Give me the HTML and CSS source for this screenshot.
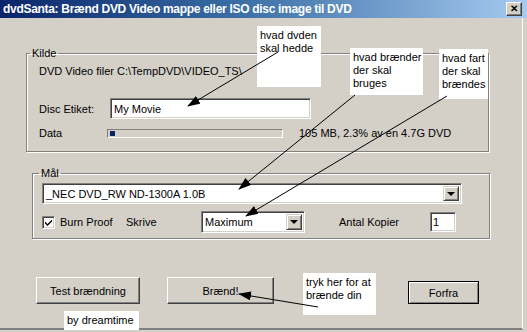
FILE: index.html
```html
<!DOCTYPE html>
<html lang="da">
<head>
    <meta charset="UTF-8">
    <title>dvdSanta</title>
    <link rel="stylesheet" href="styles.css">
</head>
<body>
    <div class="window">
        <div class="titlebar">
            <span class="title">dvdSanta: Brænd DVD Video mappe eller ISO disc image til DVD</span>
            <span class="close">✕</span>
        </div>

        <div class="client">
            <fieldset class="group kilde">
                <legend>Kilde</legend>
                <div class="group-body">
                    <div class="row src">DVD Video filer C:\TempDVD\VIDEO_TS\</div>
                    <div class="row label-row">
                        <span class="lbl lbl-disc">Disc Etiket:</span>
                        <span class="edit edit-disc">My Movie</span>
                    </div>
                    <div class="row data-row">
                        <span class="lbl lbl-data">Data</span>
                        <span class="progress"><span class="progress-fill"></span></span>
                        <span class="size">105 MB, 2.3% av en 4.7G DVD</span>
                    </div>
                </div>
            </fieldset>

            <fieldset class="group maal">
                <legend>Mål</legend>
                <div class="group-body">
                    <div class="combo combo-drive">
                        <span class="combo-text">_NEC DVD_RW ND-1300A 1.0B</span>
                        <span class="drop"><span class="tri"></span></span>
                    </div>
                    <div class="row opts">
                        <span class="check">
                            <svg width="9" height="9" viewBox="0 0 9 9"><path d="M1 3.5 L3.5 6 L8 1.5 L8 3.5 L3.5 8 L1 5.5 Z" fill="#000"/></svg>
                        </span>
                        <span class="burn">Burn Proof</span>
                        <span class="speed-lbl">Skrive<br>Hastighed</span>
                        <div class="combo combo-speed">
                            <span class="combo-text">Maximum</span>
                            <span class="drop"><span class="tri"></span></span>
                        </div>
                        <span class="copies-lbl">Antal Kopier</span>
                        <span class="edit edit-copies">1</span>
                    </div>
                </div>
            </fieldset>

            <div class="buttons">
                <span class="btn btn-test">Test brændning</span>
                <span class="btn btn-burn">Brænd!</span>
                <span class="btn btn-reset">Forfra</span>
            </div>
        </div>

        <div class="note note-name">hvad dvden<br>skal hedde</div>
        <div class="note note-burner">hvad brænder<br>der skal<br>bruges</div>
        <div class="note note-speed">hvad fart<br>der skal<br>brændes</div>
        <div class="note note-press">tryk her for at<br>brænde din</div>
        <div class="note note-by">by dreamtime</div>

        <svg class="arrows" width="527" height="332" viewBox="0 0 527 332">
            <defs>
                <marker id="head" markerUnits="userSpaceOnUse" markerWidth="13" markerHeight="9" refX="12" refY="4.5" orient="auto">
                    <path d="M0 0 L13 4.5 L0 9 Z" fill="#000"/>
                </marker>
            </defs>
            <line x1="278" y1="52" x2="188" y2="106" stroke="#000" marker-end="url(#head)"/>
            <line x1="355" y1="95" x2="239" y2="189" stroke="#000" marker-end="url(#head)"/>
            <line x1="447" y1="96" x2="246" y2="216" stroke="#000" marker-end="url(#head)"/>
            <line x1="318" y1="307" x2="239" y2="294" stroke="#000" marker-end="url(#head)"/>
        </svg>
    </div>
</body>
</html>
```

FILE: styles.css
```css
body {
    margin: 0;
    font-family: "Liberation Sans", Arial, sans-serif;
    font-size: 11px;
    color: #000;
}

.window {
    position: relative;
    width: 527px;
    height: 332px;
    background-color: #d4d0c8;
    overflow: hidden;
}

.titlebar {
    height: 18px;
    display: flex;
    align-items: center;
    justify-content: space-between;
    padding: 0 5px 0 3px;
    background: linear-gradient(to right, #0a246a, #3a6ea5 45%, #a6caf0);
}

.title {
    color: #fff;
    font-weight: bold;
    font-size: 12px;
    letter-spacing: -0.3px;
    white-space: nowrap;
}

.close {
    width: 14px;
    height: 12px;
    line-height: 12px;
    text-align: center;
    font-size: 10px;
    font-weight: bold;
    background-color: #d4d0c8;
    border-top: 1px solid #fff;
    border-left: 1px solid #fff;
    border-right: 1px solid #404040;
    border-bottom: 1px solid #404040;
    box-shadow: inset -1px -1px 0 #808080;
}

.client {
    height: 312px;
    box-sizing: border-box;
    padding-top: 28px;
    border-bottom: 2px solid #808080;
    border-right: 1px solid #fff;
    margin-right: 4px;
}

/* group boxes */
.group {
    margin: 0;
    padding: 0;
    box-sizing: border-box;
    border: 1px solid #808080;
    box-shadow: 1px 1px 0 #fff, inset 1px 1px 0 #fff;
    min-width: 0;
}

.group legend {
    padding: 0 2px;
    line-height: 14px;
}

.kilde {
    margin-left: 26px;
    width: 463px;
    height: 106px;
}

.kilde legend {
    margin-left: 3px;
}

.kilde .group-body {
    padding: 4px 0 0 12px;
}

.maal {
    margin: 14px 0 0 32px;
    width: 458px;
    height: 73px;
}

.maal legend {
    margin-left: 6px;
}

.maal .group-body {
    padding: 3px 0 0 9px;
}

.row {
    display: flex;
    align-items: center;
    line-height: 14px;
    white-space: nowrap;
}

.label-row {
    margin-top: 20px;
}

.lbl-disc {
    width: 71px;
}

.data-row {
    margin-top: 7px;
}

.lbl-data {
    width: 68px;
}

/* sunken controls */
.edit {
    box-sizing: border-box;
    background-color: #fff;
    border-top: 1px solid #808080;
    border-left: 1px solid #808080;
    border-right: 1px solid #fff;
    border-bottom: 1px solid #fff;
    box-shadow: inset 1px 1px 0 #404040, inset -1px -1px 0 #d4d0c8;
    padding: 0 3px;
    display: flex;
    align-items: center;
}

.edit-disc {
    width: 201px;
    height: 21px;
}

.progress {
    box-sizing: border-box;
    width: 176px;
    height: 9px;
    border-top: 1px solid #808080;
    border-left: 1px solid #808080;
    border-right: 1px solid #fff;
    border-bottom: 1px solid #fff;
    padding: 1px 2px;
}

.progress-fill {
    display: block;
    width: 5px;
    height: 5px;
    background-color: #0a246a;
}

.size {
    margin-left: 16px;
}

.combo {
    box-sizing: border-box;
    display: flex;
    align-items: center;
    justify-content: space-between;
    background-color: #fff;
    border-top: 1px solid #808080;
    border-left: 1px solid #808080;
    border-right: 1px solid #fff;
    border-bottom: 1px solid #fff;
    box-shadow: inset 1px 1px 0 #404040, inset -1px -1px 0 #d4d0c8;
    padding: 2px 2px 2px 3px;
}

.combo-drive {
    width: 420px;
    height: 21px;
}

.combo-speed {
    width: 104px;
    height: 22px;
}

.drop {
    box-sizing: border-box;
    width: 16px;
    height: 100%;
    display: flex;
    align-items: center;
    justify-content: center;
    background-color: #d4d0c8;
    border-top: 1px solid #d4d0c8;
    border-left: 1px solid #d4d0c8;
    border-right: 1px solid #404040;
    border-bottom: 1px solid #404040;
    box-shadow: inset 1px 1px 0 #fff, inset -1px -1px 0 #808080;
}

.tri {
    width: 0;
    height: 0;
    border-left: 4px solid transparent;
    border-right: 4px solid transparent;
    border-top: 4px solid #000;
}

.opts {
    margin-top: 7px;
    height: 22px;
}

.check {
    box-sizing: border-box;
    width: 13px;
    height: 13px;
    display: flex;
    align-items: center;
    justify-content: center;
    background-color: #fff;
    border-top: 1px solid #808080;
    border-left: 1px solid #808080;
    border-right: 1px solid #fff;
    border-bottom: 1px solid #fff;
    box-shadow: inset 1px 1px 0 #404040, inset -1px -1px 0 #d4d0c8;
}

.burn {
    margin-left: 5px;
    width: 66px;
}

.speed-lbl {
    align-self: flex-start;
    margin-top: 4px;
    width: 75px;
    height: 17px;
    line-height: 14px;
    overflow: hidden;
}

.copies-lbl {
    margin-left: 34px;
    width: 91px;
}

.edit-copies {
    width: 26px;
    height: 20px;
    padding-left: 2px;
}

/* buttons */
.buttons {
    display: flex;
    align-items: flex-end;
    margin-top: 38px;
    padding-left: 36px;
}

.btn {
    box-sizing: border-box;
    display: flex;
    align-items: center;
    justify-content: center;
    height: 27px;
    background-color: #d4d0c8;
    border-top: 1px solid #fff;
    border-left: 1px solid #fff;
    border-right: 1px solid #404040;
    border-bottom: 1px solid #404040;
    box-shadow: inset -1px -1px 0 #808080;
}

.btn-test {
    width: 104px;
}

.btn-burn {
    width: 107px;
    margin-left: 27px;
}

.btn-reset {
    width: 71px;
    height: 23px;
    margin-left: 134px;
    border: 1px solid #000;
    box-shadow: inset 1px 1px 0 #fff, inset -1px -1px 0 #808080;
}

/* annotations */
.note {
    position: absolute;
    box-sizing: border-box;
    background-color: #fff;
    line-height: 13px;
    padding: 3px 0 0 3px;
    white-space: nowrap;
}

.note-name {
    left: 257px;
    top: 26px;
    width: 64px;
    height: 61px;
}

.note-burner {
    left: 350px;
    top: 48px;
    width: 73px;
    height: 47px;
}

.note-speed {
    left: 439px;
    top: 49px;
    width: 49px;
    height: 50px;
}

.note-press {
    left: 303px;
    top: 273px;
    width: 73px;
    height: 42px;
}

.note-by {
    left: 64px;
    top: 311px;
    width: 75px;
    height: 19px;
    padding-top: 3px;
}

.arrows {
    position: absolute;
    left: 0;
    top: 0;
    pointer-events: none;
}
```
